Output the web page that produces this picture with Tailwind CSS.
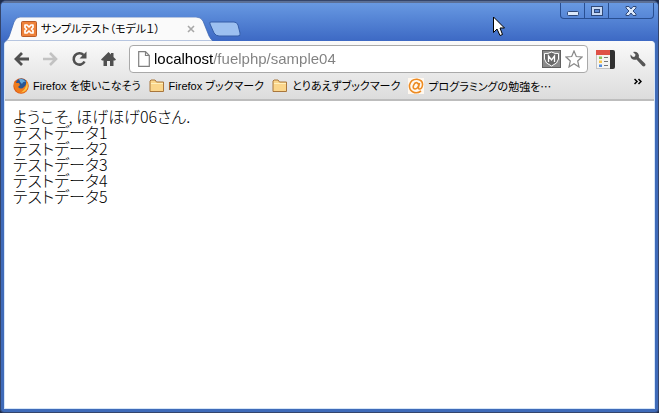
<!DOCTYPE html>
<html lang="ja">
<head>
  <meta charset="UTF-8">
  <title>サンプルテスト(モデル1)</title>
  <script src="https://cdn.jsdelivr.net/npm/@tailwindcss/browser@4"></script>
</head>
<body class="bg-[#1d2c4c] text-black font-['Liberation_Sans','Noto_Sans_CJK_JP',sans-serif] [font-feature-settings:'palt']">
  <div class="relative flex flex-col min-h-screen rounded-t-md rounded-b-sm overflow-hidden border border-[#34456b] bg-[#3f6bb9] pb-[3px]">

    <!-- title bar -->
    <header class="flex justify-between h-10 border-t-2 border-[#5c7096] bg-linear-to-b from-[#6899e2] to-[#3d69c4]">
      <div class="flex items-end pl-1">
        <div class="relative flex items-center h-6 w-52 pl-4 pr-4">
          <svg class="absolute inset-0 size-full" viewBox="0 0 208 24" preserveAspectRatio="none">
            <path d="M0 24C3 23 4 20 5 17L9 5Q11 0 15 0H191Q196 0 198 4L204 19Q206 23 208 24Z" fill="#fafafa" stroke="#3863b0" stroke-width=".7"/>
          </svg>
          <svg class="relative size-4 shrink-0" viewBox="0 0 16 16">
            <rect x=".5" y=".5" width="15" height="15" rx="1" fill="#ee8139" stroke="#b95b28"/>
            <path d="M4 4H6L8 6L10 4H12V6.500L10.500 8L12 9.500V12H10L8 10L6 12H4V9.500L5.500 8L4 6.500Z" fill="none" stroke="#fff" stroke-width="1.700" stroke-linejoin="round"/>
          </svg>
          <span class="relative pl-1 text-[11px] whitespace-nowrap grow">サンプルテスト（モデル１）</span>
          <button class="relative mr-0.5" aria-label="タブを閉じる">
            <svg class="size-2" viewBox="0 0 8 8"><path d="M1 1L7 7M7 1L1 7" stroke="#a8a8a8" stroke-width="1.600"/></svg>
          </button>
        </div>
        <button class="mb-1 -ml-1" aria-label="新しいタブ">
          <svg class="w-8 h-4" viewBox="0 0 32 16">
            <path d="M2 1H25Q28 1 29 4L31 12Q32 15 29 15H10Q7 15 5 12L1 3Q0 1 2 1Z" fill="#9cc0f0" stroke="#345da7"/>
          </svg>
        </button>
      </div>
      <div class="flex h-4 mr-1 rounded-b border border-t-0 border-[#294f92] divide-x divide-[#294f92]">
        <button class="w-6 flex justify-center items-center" aria-label="最小化">
          <svg class="w-3 h-3" viewBox="0 0 12 12"><rect x=".5" y="6.500" width="11" height="4" rx="1" fill="#dce9fb" stroke="#2f4878"/></svg>
        </button>
        <button class="w-6 flex justify-center items-center" aria-label="最大化">
          <svg class="w-3 h-3" viewBox="0 0 12 12"><rect x=".5" y="1.500" width="11" height="9" fill="#c6d8f4" stroke="#2f4878"/><rect x="3.500" y="4.500" width="5" height="3" fill="#5f8bd5" stroke="#2f4878"/></svg>
        </button>
        <button class="w-11 flex justify-center items-center" aria-label="閉じる">
          <svg class="w-3 h-3" viewBox="0 0 12 12"><path d="M1 1.500H4L6 4L8 1.500H11V3L8 6L11 9V10.500H8L6 8L4 10.500H1V9L4 6L1 3Z" fill="#dce9fb" stroke="#2f4878"/></svg>
        </button>
      </div>
    </header>

    <div class="flex flex-col grow mx-[3px] border-x border-b border-[#d5e5f7] rounded-t bg-white">
      <div class="rounded-t bg-linear-to-b from-[#fafafa] to-[#dcdcdc] border-b-2 border-[#bdbdbd]">
        <!-- toolbar -->
        <div class="flex items-center h-8 pl-2 pr-2 pt-1">
          <nav class="flex gap-3">
            <button aria-label="戻る"><svg class="w-[17px] h-4" viewBox="0 0 17 16"><path d="M16 8H3M9 2L3 8L9 14" fill="none" stroke="#505050" stroke-width="2.800"/></svg></button>
            <button aria-label="進む"><svg class="w-[17px] h-4" viewBox="0 0 17 16"><path d="M1 8H14M8 2L14 8L8 14" fill="none" stroke="#c2c2c2" stroke-width="2.600"/></svg></button>
            <button aria-label="再読み込み"><svg class="w-[17px] h-4" viewBox="0 0 17 16"><path d="M13.500 10.500A5.700 5.700 0 1 1 12.500 4" fill="none" stroke="#505050" stroke-width="2.600"/><path d="M15.500 .5V7.500H8.500Z" fill="#505050"/></svg></button>
            <button aria-label="ホーム"><svg class="w-[17px] h-4" viewBox="0 0 17 16"><path d="M8.500 1L1 8.500L2 9.500H3.500V15H7V10H10V15H13.500V9.500H15L16 8.500L13.500 6V2H11V3.500Z" fill="#505050"/></svg></button>
          </nav>
          <div class="flex items-center grow ml-3 h-7 rounded-sm border border-[#a9a9a9] bg-white pl-2 pr-1">
            <svg class="w-3 h-4 shrink-0" viewBox="0 0 12 16"><path d="M.7 .7H7.500L11.300 4.500V15.300H.7ZM7.500 .7V4.500H11.300" fill="#fff" stroke="#808080" stroke-width="1.200"/></svg>
            <!-- host in black, path in grey -->
            <input type="text" aria-label="アドレス" value="localhost/fuelphp/sample04" class="grow min-w-0 ml-1 text-[15px] leading-5 outline-none text-transparent caret-black bg-clip-text bg-[linear-gradient(90deg,#000_59px,#808080_59px)]">
            <button class="mr-1" aria-label="McAfee"><svg class="w-[19px] h-[18px]" viewBox="0 0 19 18"><rect x=".5" y=".5" width="18" height="17" fill="#8a8a8a" stroke="#606060"/><path d="M2.500 3.500Q6 4 9.500 2Q13 4 16.500 3.500V9Q16 13.500 9.500 16Q3 13.500 2.500 9Z" fill="#6a6a6a" stroke="#fff"/><path d="M6.500 12V6L9.500 10L12.500 6V12" fill="none" stroke="#fff" stroke-width="1.300"/></svg></button>
            <button aria-label="ブックマークに追加"><svg class="size-[18px]" viewBox="0 0 18 18"><path d="M9 1L11.300 6.500L17 7L12.700 11L14 17L9 13.800L4 17L5.300 11L1 7L6.700 6.500Z" fill="#fff" stroke="#888" stroke-width="1.200"/></svg></button>
          </div>
          <button class="ml-2" aria-label="拡張機能"><svg class="w-5 h-[19px]" viewBox="0 0 20 19"><rect x=".5" y=".5" width="16" height="18" fill="#f5f5f3" stroke="#c4c4c4"/><path d="M0 0H15V5H0Z" fill="#df5147"/><path d="M14 0H17Q19 0 19 2V17Q19 19 17 19H14Z" fill="#303030"/><path d="M3 6.500H6V9H3Z" fill="#91c15a"/><path d="M3 10.500H6V13H3Z" fill="#f7c54a"/><path d="M3 14.500H6V17H3Z" fill="#538bdd"/><path d="M8 7.500H12M8 11.500H12M8 15.500H12" stroke="#777"/></svg></button>
          <button class="ml-3.5" aria-label="設定"><svg class="size-4" viewBox="0 0 16 16"><path d="M3 1L5.500 3.500L5 5.500L3 6L.5 3.500Q0 7 3 8.500Q5 9 6.500 8.500L12.500 15Q14 16 15.200 14.800Q16 13.500 15 12.500L8.800 6.500Q9.500 4 8 2.200Q6 .3 3 1Z" fill="#565656"/></svg></button>
        </div>

        <!-- bookmarks -->
        <nav class="flex items-center h-[26px] pl-2 pr-3 gap-2 text-[11px] whitespace-nowrap">
          <a href="#" class="flex items-center gap-1">
            <svg class="size-4" viewBox="0 0 16 16"><circle cx="8" cy="8" r="7.700" fill="#dc5a17"/><circle cx="8.500" cy="6" r="5.500" fill="#285694"/><path d="M6 1Q10 0 13 4Q10 3 9 6Q7 5 6 1Z" fill="#65a9db"/><path d="M1 3L3 5L6 5L7 7L5 9Q8 12 11 9Q14 7 13 2Q16 5 15 10Q13 16 7 15Q0 13 1 3Z" fill="#f07b1b"/><path d="M14 4Q17 13 8 14.500Q13 11 13.500 6Z" fill="#fcc646"/></svg>
            Firefox を使いこなそう
          </a>
          <a href="#" class="flex items-center gap-1">
            <svg class="size-4" viewBox="0 0 16 16"><path d="M1 3L2 2H6L7.500 4H14.500V13.500H1Z" fill="#fbd68b" stroke="#a8763d"/><path d="M2 5.500H14" stroke="#fff0bd"/></svg>
            Firefox ブックマーク
          </a>
          <a href="#" class="flex items-center gap-1">
            <svg class="size-4" viewBox="0 0 16 16"><path d="M1 3L2 2H6L7.500 4H14.500V13.500H1Z" fill="#fbd68b" stroke="#a8763d"/><path d="M2 5.500H14" stroke="#fff0bd"/></svg>
            とりあえずブックマーク
          </a>
          <a href="#" class="flex items-center gap-1 font-['Noto_Sans_CJK_JP',sans-serif]">
            <svg class="size-4" viewBox="0 0 16 16"><rect width="16" height="16" fill="#fff8ef"/><path d="M13 13Q9 16 5 14Q1 12 1.500 7Q3 1 9 1.200Q15 2 14.500 7Q14 11 11.500 11Q10 11 10.500 9L11.500 5M10.500 8Q9 11 7 11Q4.500 10.500 5.500 7.500Q7 4 9 4.700Q11 5.500 10.500 8Z" fill="none" stroke="#ed8b23" stroke-width="1.600"/></svg>
            プログラミングの勉強を…
          </a>
          <button class="ml-auto" aria-label="その他のブックマーク"><svg class="w-2 h-4" viewBox="0 0 8 16"><path d="M.5 1L3 3.500L.5 6M4.500 1L7 3.500L4.500 6" fill="none" stroke="#000" stroke-width="1.500"/></svg></button>
        </nav>
      </div>

      <!-- page -->
      <main class="grow px-2 py-[7px] text-base leading-4 font-light font-['Noto_Sans_CJK_JP',sans-serif]">
        <p>ようこそ, ほげほげ06さん.</p>
        <p>テストデータ1</p>
        <p>テストデータ2</p>
        <p>テストデータ3</p>
        <p>テストデータ4</p>
        <p>テストデータ5</p>
      </main>
    </div>

    <!-- mouse pointer -->
    <svg class="absolute left-[492px] top-[15px] w-3 h-[21px] pointer-events-none" viewBox="0 0 12 21"><path d="M.5 1V16.500L4 13L7 19.500L9.500 18.500L7 12H11.500Z" fill="#fff" stroke="#000"/></svg>
  </div>
</body>
</html>
